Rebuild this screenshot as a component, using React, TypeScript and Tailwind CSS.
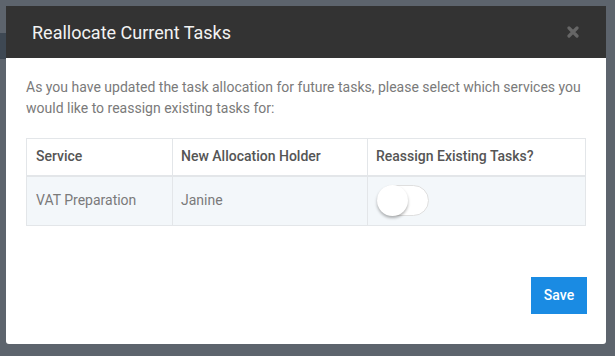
import { useState } from "react";

export default function App() {
  const [reassign, setReassign] = useState(false);

  return (
    <div className="relative h-[356px] w-[615px] overflow-hidden bg-[#5d646d] pl-[6px] pt-[6px] font-['Roboto',sans-serif]">
      <div className="absolute left-0 top-[33px] h-[26px] w-[6px] bg-[#3e4853]" />
      <div className="relative flex w-[600px] flex-col rounded-b-[3px] bg-white">
        <div className="flex h-[52px] items-center justify-between bg-[#333333] pl-[26px] pr-[25px]">
          <h2 className="text-[18px] font-normal text-[#f2f2f2]">Reallocate Current Tasks</h2>
          <button type="button" className="flex h-4 w-4 items-center justify-center">
            <svg width="12" height="12" viewBox="0 0 12 12">
              <path d="M2 2 L10 10 M10 2 L2 10" stroke="#666" strokeWidth="3.2" strokeLinecap="round" />
            </svg>
          </button>
        </div>

        <div className="px-[20px] pt-[19px]">
          <p className="text-[14px] leading-[21px] text-[#7a7a7a]">
            As you have updated the task allocation for future tasks, please select which services you would like to reassign existing tasks for:
          </p>

          <table className="mt-[19px] w-[560px] border-collapse text-[14px]">
            <thead>
              <tr className="h-[37px] border border-b-2 border-[#e3e6e9] text-left">
                <th className="w-[146px] border-r border-[#e3e6e9] pl-[9px] font-medium text-[#555]">Service</th>
                <th className="w-[195px] border-r border-[#e3e6e9] pl-[8px] font-medium text-[#555]">New Allocation Holder</th>
                <th className="pl-[8px] font-medium text-[#555]">Reassign Existing Tasks?</th>
              </tr>
            </thead>
            <tbody>
              <tr className="h-[50px] border border-[#e3e6e9] bg-[#f3f7fa]">
                <td className="border-r border-[#e3e6e9] pl-[9px] text-[#7a7a7a]">VAT Preparation</td>
                <td className="border-r border-[#e3e6e9] pl-[8px] text-[#7a7a7a]">Janine</td>
                <td className="pl-[9px]">
                  <button
                    type="button"
                    onClick={() => setReassign(!reassign)}
                    className={`relative flex h-[31px] w-[52px] items-center rounded-full border ${reassign ? "border-[#1a8be3] bg-[#1a8be3]" : "border-[#dfdfdf] bg-white"}`}
                  >
                    <span
                      className={`absolute top-[-1px] h-[31px] w-[31px] rounded-full bg-white shadow-[0_2px_3px_rgba(0,0,0,0.3)] ${reassign ? "left-[20px]" : "left-[-1px]"}`}
                    />
                  </button>
                </td>
              </tr>
            </tbody>
          </table>
        </div>

        <div className="flex justify-end pb-[30px] pr-[19px] pt-[51px]">
          <button type="button" className="h-[37px] w-[56px] bg-[#1a8be3] text-[14px] font-medium text-white">
            Save
          </button>
        </div>
      </div>
    </div>
  );
}
